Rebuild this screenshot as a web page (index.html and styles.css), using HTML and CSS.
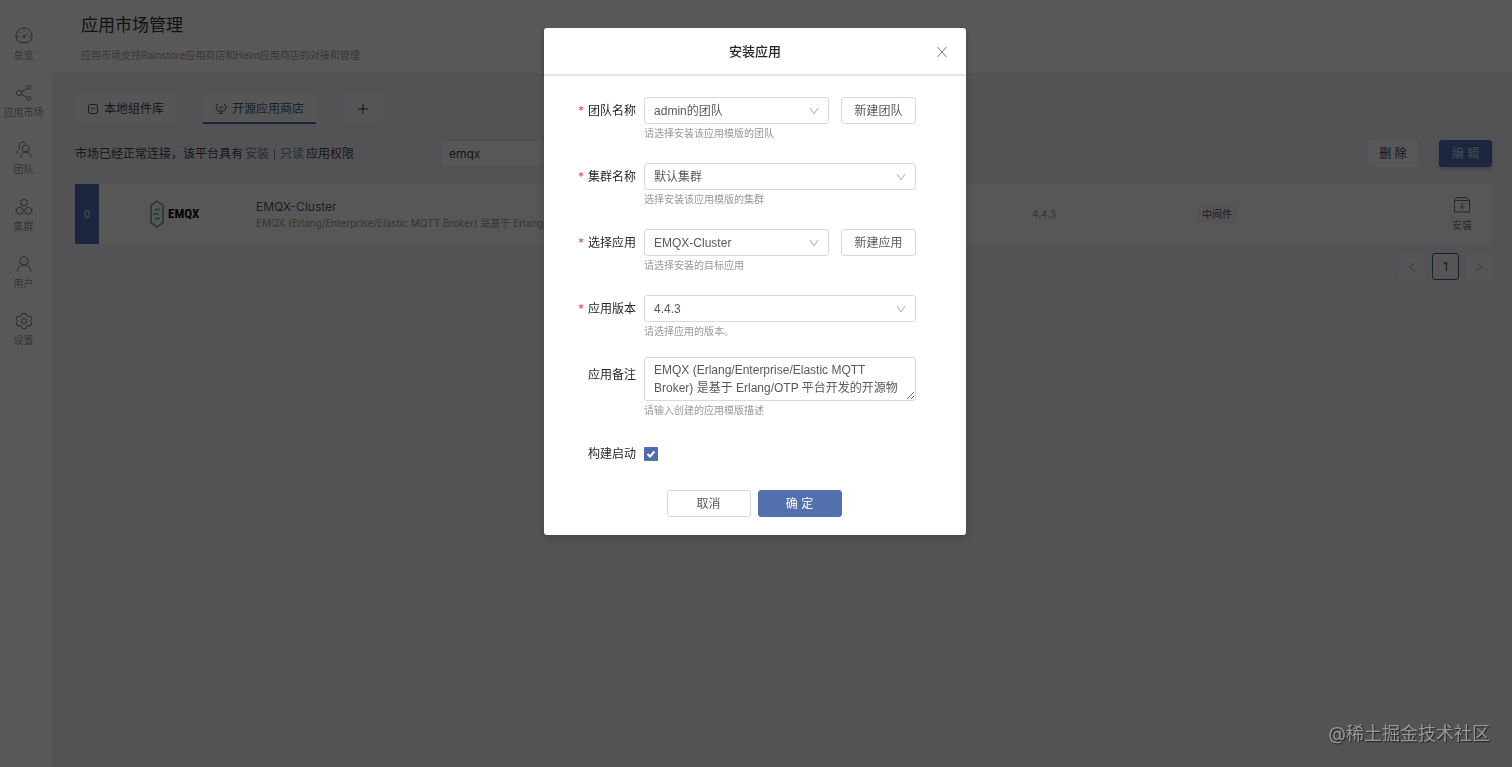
FILE: index.html
```html
<!DOCTYPE html>
<html lang="zh-CN">
<head>
<meta charset="utf-8">
<meta name="viewport" content="width=device-width, initial-scale=1">
<title>应用市场管理</title>
<link rel="stylesheet" href="styles.css">
</head>
<body>
<div class="layout">
  <nav class="sidebar">
    <a class="nav-item" href="#">
      <svg class="nav-icon" viewBox="0 0 18 18"><path d="M4.600 15.600a8 8 0 1 1 8.800 0z"/><path d="M9 9.500l3.500-3.500M9 2.800v1.600M4.300 4.800l1.100 1.100M2.600 9.500h1.600M13.800 9.500h1.600"/><circle cx="8.800" cy="9.900" r="1"/></svg>
      <span>总览</span>
    </a>
    <a class="nav-item" href="#">
      <svg class="nav-icon" viewBox="0 0 18 18"><circle cx="4.200" cy="9" r="2.600"/><circle cx="13.800" cy="3.600" r="1.900"/><circle cx="13.800" cy="14.400" r="1.900"/><path d="M6.500 7.700l5.600-3.200M6.500 10.300l5.600 3.200"/></svg>
      <span>应用市场</span>
    </a>
    <a class="nav-item" href="#">
      <svg class="nav-icon" viewBox="0 0 18 18"><circle cx="10.800" cy="7.500" r="3.500"/><path d="M5.800 16.500c.2-3.500 2.200-5.500 5-5.500s5 2 5.200 5.500M10.500 2.300A3.700 3.700 0 1 0 5 7.300C3 8.300 1.800 10 1.600 12.500"/></svg>
      <span>团队</span>
    </a>
    <a class="nav-item" href="#">
      <svg class="nav-icon" viewBox="0 0 18 18"><path d="M9 1l3.200 1.800v3.600L9 8.200 5.800 6.400V2.800zM4.600 9l3.400 1.900v3.700l-3.400 1.900-3.400-1.900v-3.700zM13.400 9l3.400 1.900v3.700l-3.400 1.900-3.400-1.900v-3.700z"/></svg>
      <span>集群</span>
    </a>
    <a class="nav-item" href="#">
      <svg class="nav-icon" viewBox="0 0 18 18"><circle cx="9" cy="5.800" r="4.200"/><path d="M2.200 16.800c.3-4.200 3-6.800 6.800-6.800s6.500 2.600 6.800 6.800"/></svg>
      <span>用户</span>
    </a>
    <a class="nav-item" href="#">
      <svg class="nav-icon" viewBox="0 0 18 18"><path d="M7.100 1.400h3.800l.6 2.300 1.400.8 2.300-.7 1.800 3.200L15.300 8.600v.8l1.700 1.600-1.800 3.200-2.300-.7-1.400.8-.6 2.300H7.100l-.6-2.300-1.400-.8-2.300.7L1 11l1.700-1.600v-.8L1 7l1.800-3.200 2.300.7 1.400-.8z"/><circle cx="9" cy="9" r="2.600"/></svg>
      <span>设置</span>
    </a>
  </nav>

  <div class="main">
    <header class="page-header">
      <h1 class="page-title">应用市场管理</h1>
      <p class="page-subtitle">应用市场支持Rainstore应用商店和Helm应用商店的对接和管理</p>
    </header>

    <main class="content">
      <div class="tabs">
        <button class="tab" type="button">
          <svg class="tab-icon" viewBox="0 0 12 12"><rect x="1.500" y="1.500" width="9" height="9" rx="2"/><path d="M4 4.500l2 2 2-2"/></svg>
          本地组件库
        </button>
        <button class="tab tab-active" type="button">
          <svg class="tab-icon" viewBox="0 0 12 12"><path d="M3 1.500H2L1 4l1.500 4h7L11 4l-1-2.500H9M3.500 4L5 5.500l1.500-2L8.500 5M4 10.500h4M6 8v2.500"/></svg>
          开源应用商店
        </button>
        <button class="tab tab-add" type="button" aria-label="新增">
          <svg class="tab-icon" viewBox="0 0 12 12"><path d="M6 1v10M1 6h10"/></svg>
        </button>
      </div>

      <div class="toolbar">
        <p class="status">市场已经正常连接，该平台具有<span class="perm">安装</span><span class="bar"></span><span class="perm perm-last">只读</span>应用权限</p>
        <input class="search" type="text" value="emqx" aria-label="搜索应用">
        <div class="actions">
          <button class="btn btn-plain" type="button">删 除</button>
          <button class="btn btn-blue" type="button">编 辑</button>
        </div>
      </div>

      <article class="app-card">
        <div class="app-count">0</div>
        <div class="app-logo">
          <svg class="logo-mark" viewBox="0 0 14 28"><path d="M7 1l6 4.500v17L7 27l-6-4.500v-17z"/><path d="M4.500 9.500H10M3 14h5.500M4.500 18.500H10"/></svg>
          <span class="logo-word">EMQX</span>
        </div>
        <div class="app-info">
          <h2 class="app-name">EMQX-Cluster</h2>
          <p class="app-desc">EMQX (Erlang/Enterprise/Elastic MQTT Broker) 是基于 Erlang/OTP 平台开发的开源物</p>
        </div>
        <div class="app-version">4.4.3</div>
        <div><span class="tag">中间件</span></div>
        <a class="install" href="#">
          <svg class="install-icon" viewBox="0 0 18 18"><path d="M1.500 4.500h15v11.500h-15zM1.500 4.500l2.500-3h10l2.500 3M9 6.500v6M6.500 10L9 12.500l2.500-2.500"/></svg>
          <span>安装</span>
        </a>
      </article>

      <div class="pagination">
        <button class="page-btn" type="button" aria-label="上一页"><svg class="page-arrow" viewBox="0 0 10 10"><path d="M8 1L2 5l6 4"/></svg></button>
        <button class="page-btn page-current" type="button">1</button>
        <button class="page-btn" type="button" aria-label="下一页"><svg class="page-arrow" viewBox="0 0 10 10"><path d="M2 1l6 4-6 4"/></svg></button>
      </div>
    </main>
  </div>
</div>

<div class="overlay">
  <section class="modal" role="dialog" aria-modal="true" aria-labelledby="modal-title">
    <header class="modal-header">
      <h2 class="modal-title" id="modal-title">安装应用</h2>
      <button class="modal-close" type="button" aria-label="关闭"><svg class="close-icon" viewBox="0 0 12 12"><path d="M1.500 1l9 10M10.500 1l-9 10"/></svg></button>
    </header>
    <form class="modal-body">
      <div class="field">
        <label class="label required" for="team">团队名称</label>
        <div class="control">
          <div class="control-row">
            <div class="select-wrap">
              <select class="box" id="team"><option>admin的团队</option></select>
              <svg class="chevron" viewBox="0 0 10 8"><path d="M1 1l4 6 4-6"/></svg>
            </div>
            <button class="side-btn" type="button">新建团队</button>
          </div>
          <p class="help">请选择安装该应用模版的团队</p>
        </div>
      </div>
      <div class="field">
        <label class="label required" for="cluster">集群名称</label>
        <div class="control">
          <div class="control-row">
            <div class="select-wrap">
              <select class="box" id="cluster"><option>默认集群</option></select>
              <svg class="chevron" viewBox="0 0 10 8"><path d="M1 1l4 6 4-6"/></svg>
            </div>
          </div>
          <p class="help">选择安装该应用模版的集群</p>
        </div>
      </div>
      <div class="field">
        <label class="label required" for="app">选择应用</label>
        <div class="control">
          <div class="control-row">
            <div class="select-wrap">
              <select class="box" id="app"><option>EMQX-Cluster</option></select>
              <svg class="chevron" viewBox="0 0 10 8"><path d="M1 1l4 6 4-6"/></svg>
            </div>
            <button class="side-btn" type="button">新建应用</button>
          </div>
          <p class="help">请选择安装的目标应用</p>
        </div>
      </div>
      <div class="field">
        <label class="label required" for="version">应用版本</label>
        <div class="control">
          <div class="control-row">
            <div class="select-wrap">
              <select class="box" id="version"><option>4.4.3</option></select>
              <svg class="chevron" viewBox="0 0 10 8"><path d="M1 1l4 6 4-6"/></svg>
            </div>
          </div>
          <p class="help">请选择应用的版本。</p>
        </div>
      </div>
      <div class="field">
        <label class="label" for="note">应用备注</label>
        <div class="control control-note">
          <textarea class="box note" id="note" rows="2">EMQX (Erlang/Enterprise/Elastic MQTT Broker) 是基于 Erlang/OTP 平台开发的开源物</textarea>
          <p class="help">请输入创建的应用模版描述</p>
        </div>
      </div>
      <div class="field">
        <label class="label" for="build">构建启动</label>
        <div class="control check-wrap">
          <input class="check" type="checkbox" id="build" checked>
          <svg class="check-mark" viewBox="0 0 14 14"><path d="M3.500 7l2.500 2.500 4.500-5"/></svg>
        </div>
      </div>
      <div class="modal-footer">
        <button class="foot-btn" type="button">取消</button>
        <button class="foot-btn foot-primary" type="submit">确 定</button>
      </div>
    </form>
  </section>
</div>
<div class="watermark">@稀土掘金技术社区</div>
</body>
</html>
```

FILE: styles.css
```css
* { box-sizing: border-box; }

body {
  margin: 0;
  background: #eeeef2;
  color: #444;
  font-family: Inter, "Noto Sans CJK SC", sans-serif;
  font-size: 12px;
  line-height: 18px;
}

h1, h2, p { margin: 0; font-weight: 400; }
a { color: inherit; text-decoration: none; }
button, input, select, textarea { font: inherit; color: inherit; margin: 0; }
svg { display: block; fill: none; stroke: currentColor; }

.layout { display: flex; min-height: 100vh; }

.sidebar {
  display: flex;
  flex-direction: column;
  gap: 17px;
  flex: 0 0 52px;
  padding: 27px 5px 0 0;
  background: #fcfcfc;
}
.nav-item {
  display: flex;
  flex-direction: column;
  align-items: center;
  height: 40px;
  gap: 1px;
  color: #999;
  font-size: 10px;
  line-height: 18px;
  white-space: nowrap;
}
.nav-icon { width: 18px; height: 18px; color: #777; }

.main { flex: 1; min-width: 0; }
.page-header { height: 73px; padding: 13px 29px 0; background: #fcfcfc; }
.page-title { color: #333; font-size: 17px; line-height: 24px; }
.page-subtitle { margin-top: 9px; color: #a0a0a0; font-size: 10px; line-height: 18px; }

.content { padding: 20px 20px 20px 23px; }

.tabs { display: flex; gap: 27px; }
.tab {
  display: flex;
  align-items: center;
  gap: 5px;
  height: 31px;
  padding: 2px 12px 0;
  border: 0;
  border-bottom: 2px solid transparent;
  background: #f6f6f6;
  background-clip: padding-box;
}
.tab-active { border-bottom-color: #4a6cae; color: #4a5d80; }
.tab-add { padding: 2px 14px 0; color: #333; }
.tab-icon { width: 12px; height: 12px; }

.toolbar { display: flex; align-items: center; margin-top: 16px; }
.status { flex: 0 0 365px; }
.perm { margin-left: 2px; color: #6b82a8; }
.perm-last { margin: 0 2px 0 0; }
.bar { display: inline-block; width: 1px; height: 10px; margin: 0 5px; background: #6b82a8; vertical-align: -1px; }
.search {
  width: 300px;
  height: 27px;
  padding: 0 8px;
  border: 1px solid #e6e6e6;
  border-radius: 3px;
  background: #f8f8f8;
}
.actions { display: flex; gap: 21px; margin-left: auto; }
.btn { width: 50px; height: 27px; padding: 0; border: 0; border-radius: 3px; }
.btn-plain { background: #f8f8f8; }
.btn-blue { width: 53px; background: #4d6fb3; color: #c8d0e0; box-shadow: 0 2px 4px rgba(0, 0, 0, .2); }

.app-card {
  display: grid;
  grid-template-columns: 24px 157px 1fr 165px 235px 60px;
  align-items: center;
  height: 60px;
  margin-top: 17px;
  background: #fafafa;
}
.app-count {
  display: flex;
  align-items: center;
  justify-content: center;
  align-self: stretch;
  background: #4d6fb3;
  color: #e0e6f0;
  font-size: 10px;
}
.app-logo { display: flex; align-items: center; gap: 4px; padding-left: 51px; }
.logo-mark { width: 14px; height: 28px; color: #3fa68c; stroke-width: 1.500; }
.logo-word { color: #000; font-family: "Roboto Condensed", "Liberation Sans Narrow", Roboto, sans-serif; font-size: 13px; font-weight: 700; }
.app-info { min-width: 0; }
.app-name { color: #4a5d80; font-size: 12px; line-height: 17px; }
.app-desc { overflow: hidden; color: #999; font-size: 10px; line-height: 16px; text-overflow: ellipsis; white-space: nowrap; }
.app-version { color: #999; font-size: 10px; }
.tag { display: inline-block; padding: 0 5px; border-radius: 3px; background: #f0f0f5; color: #555; font-size: 10px; }
.install { display: flex; flex-direction: column; align-items: center; gap: 2px; padding-top: 1px; color: #777; font-size: 10px; }
.install-icon { width: 18px; height: 18px; }

.pagination { display: flex; justify-content: flex-end; gap: 7px; margin-top: 9px; }
.page-btn {
  display: flex;
  align-items: center;
  justify-content: center;
  width: 26px;
  height: 27px;
  padding: 0;
  border: 1px solid #f6f6f6;
  border-radius: 3px;
  background: #f6f6f6;
}
.page-current { width: 27px; border-color: #4a5d80; }
.page-arrow { width: 10px; height: 10px; color: #aaa; }

.overlay {
  position: fixed;
  inset: 0;
  display: flex;
  align-items: flex-start;
  justify-content: center;
  overflow: auto;
  padding: 28px 2px 28px 0;
  background: rgba(0, 0, 0, .65);
}
.modal { width: 422px; border-radius: 3px; background: #fff; box-shadow: 0 3px 10px rgba(0, 0, 0, .2); }
.modal-header {
  position: relative;
  padding: 14px 40px;
  box-shadow: 0 1px 3px rgba(0, 0, 0, .2);
  text-align: center;
}
.modal-title { color: #262626; font-size: 13px; font-weight: 500; line-height: 18px; }
.modal-close {
  position: absolute;
  top: 12px;
  right: 12px;
  display: flex;
  align-items: center;
  justify-content: center;
  width: 24px;
  height: 24px;
  padding: 0;
  border: 0;
  background: none;
  color: #777;
}
.close-icon { width: 12px; height: 12px; }

.modal-body { padding: 23px 50px 18px 34px; color: #595959; }
.field { display: flex; gap: 8px; margin-bottom: 21px; }
.label { flex: 0 0 58px; color: #262626; line-height: 27px; text-align: right; white-space: nowrap; }
.required::before { content: "*"; margin-right: 4px; color: #f0484f; }
.control { flex: 1; min-width: 0; }
.control-row { display: flex; gap: 12px; }
.select-wrap { position: relative; flex: 1; }
.box {
  display: block;
  width: 100%;
  height: 27px;
  padding: 0 9px;
  border: 1px solid #d9d9d9;
  border-radius: 3px;
  background: #fff;
  font-family: "Liberation Sans", "Noto Sans CJK SC", sans-serif;
  appearance: none;
}
.chevron { position: absolute; top: 10px; right: 10px; width: 10px; height: 8px; color: #aaa; pointer-events: none; }
.side-btn { flex: 0 0 75px; padding: 0; border: 1px solid #d9d9d9; border-radius: 3px; background: #fff; }
.help { color: #999; font-size: 10px; line-height: 18px; }
.control-note { margin-top: -4px; }
.note { height: 44px; padding: 3px 9px; overflow: hidden; line-height: 18px; resize: vertical; }
.check-wrap { position: relative; display: flex; align-items: center; }
.check { width: 14px; height: 14px; border-radius: 1px; background: #4d6dae; appearance: none; }
.check-mark { position: absolute; left: 0; width: 14px; height: 14px; color: #fff; stroke-width: 2; pointer-events: none; }

.modal-footer { display: flex; justify-content: center; gap: 7px; margin-top: 23px; padding-left: 14px; }
.foot-btn { width: 84px; height: 27px; padding: 0; border: 1px solid #d9d9d9; border-radius: 3px; background: #fff; }
.foot-primary { border-color: #5270ae; background: #5270ae; color: #fff; }

.watermark {
  position: fixed;
  right: 22px;
  bottom: 20px;
  color: #999;
  font-size: 18px;
  line-height: 26px;
  text-shadow: 1px 1px 1px #222;
  pointer-events: none;
}
```
